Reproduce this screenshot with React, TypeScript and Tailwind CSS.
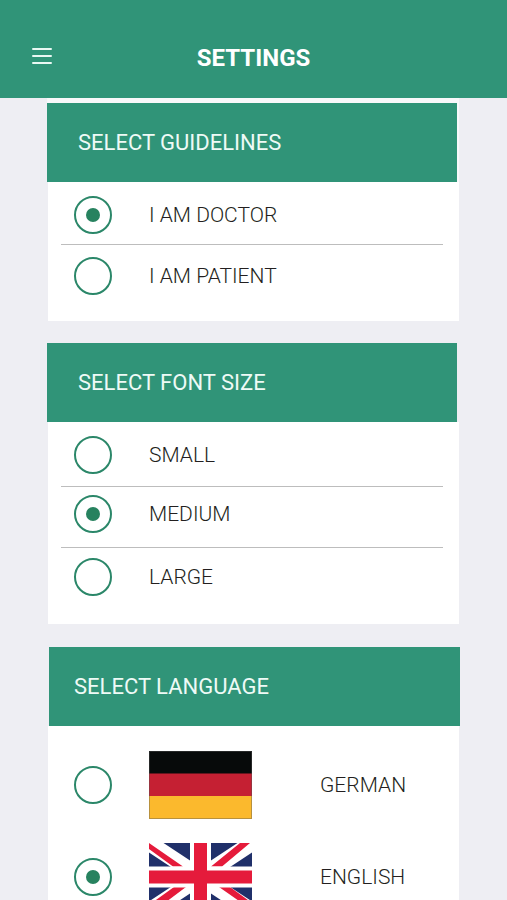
import { useState } from 'react';

const ring =
  "grid size-[38px] shrink-0 cursor-pointer appearance-none place-items-center rounded-full border-2 border-[#2b8769] bg-white before:size-3.5 before:rounded-full before:content-[''] checked:before:bg-[#27825f]";
const label = 'text-[21px] leading-7 font-light text-[#231f20]';

const guidelines = [
  { id: 'doctor', text: 'I AM DOCTOR', pad: 'pt-3.5 pb-2.5' },
  { id: 'patient', text: 'I AM PATIENT', pad: 'pt-3 pb-6.5' },
];

const sizes = [
  { id: 'small', text: 'SMALL', pad: 'pt-3.5 pb-3' },
  { id: 'medium', text: 'MEDIUM', pad: 'pt-2 pb-3.5' },
  { id: 'large', text: 'LARGE', pad: 'pt-2.5 pb-7' },
];

function GermanFlag() {
  return (
    <svg viewBox="0 0 103 68" className="h-[68px] w-[103px] shrink-0" aria-hidden="true">
      <rect width="103" height="23" fill="#070a0a" />
      <rect y="22.5" width="103" height="23" fill="#c52033" />
      <rect y="45" width="103" height="23" fill="#fbb92d" />
      <rect x=".5" y=".5" width="102" height="67" fill="none" stroke="#555" strokeOpacity=".4" />
    </svg>
  );
}

function BritishFlag() {
  return (
    <svg viewBox="0 0 103 68" className="h-[68px] w-[103px] shrink-0" aria-hidden="true">
      <rect width="103" height="68" fill="#20306a" />
      <path d="M0 0L103 68M103 0L0 68" stroke="#fff" strokeWidth="16" />
      {/* the red diagonals are shifted off centre in every quarter */}
      <path
        d="M0 0L34 23.5H24L0 6ZM101 0H91L62 23.5H73ZM37 44H25L0 62V68H5ZM70 44H81L103 60V67Z"
        fill="#e51b3b"
      />
      <path d="M51.5 0V68M0 34H103" stroke="#fff" strokeWidth="21" />
      <path d="M51.5 0V68M0 34H103" stroke="#e51b3b" strokeWidth="13" />
    </svg>
  );
}

const languages = [
  { id: 'de', text: 'GERMAN', Flag: GermanFlag },
  { id: 'en', text: 'ENGLISH', Flag: BritishFlag },
];

function Title({ className, children }: { className: string; children: React.ReactNode }) {
  return (
    <h2 className={`flex h-[79px] items-center bg-[#309478] text-[22px] leading-7 text-[#eefaf6] ${className}`}>
      {children}
    </h2>
  );
}

type Option = { id: string; text: string; pad: string };

function Options({ name, options, value, onChange }: { name: string; options: Option[]; value: string; onChange: (v: string) => void }) {
  return (
    <div className="ml-px divide-y divide-[#bdbdbd] bg-white pr-4 pl-[13px]">
      {options.map(o => (
        <label key={o.id} className={`flex cursor-pointer items-center gap-[37px] pl-[13px] ${o.pad}`}>
          <input type="radio" name={name} checked={value === o.id} onChange={() => onChange(o.id)} className={ring} />
          <span className={label}>{o.text}</span>
        </label>
      ))}
    </div>
  );
}

export default function App() {
  const [role, setRole] = useState('doctor');
  const [size, setSize] = useState('medium');
  const [lang, setLang] = useState('en');

  return (
    <div className="flex h-screen flex-col bg-[#eeeef3] font-['Roboto',sans-serif]">
      <header className="grid h-[98px] shrink-0 grid-cols-[1fr_auto_1fr] items-center bg-[#309478] px-8 pt-[18px] text-white">
        <button type="button" aria-label="Menu" className="justify-self-start pb-1">
          <svg width="20" height="18" viewBox="0 0 20 18" stroke="#e9f8f3" strokeWidth="2" strokeLinecap="round">
            <path d="M1 2H19M1 9H19M1 16H19" />
          </svg>
        </button>
        <h1 className="text-2xl leading-7 font-bold">SETTINGS</h1>
      </header>

      <main className="flex-1 overflow-y-auto pr-12 pl-[47px] [scrollbar-width:none]">
        <section className="mb-[22px]">
          <div className="bg-[#f8f8fa] pt-[5px]">
            <Title className="mr-0.5 pl-[31px]">SELECT GUIDELINES</Title>
          </div>
          <Options name="role" options={guidelines} value={role} onChange={setRole} />
        </section>

        <section className="mb-[23px]">
          <Title className="mr-0.5 pl-[31px]">SELECT FONT SIZE</Title>
          <Options name="size" options={sizes} value={size} onChange={setSize} />
        </section>

        <section>
          <Title className="-mr-px ml-0.5 pl-[25px]">SELECT LANGUAGE</Title>
          <div className="ml-px flex flex-col gap-6 bg-white pt-[25px] pb-8 pl-[26px]">
            {languages.map(({ id, text, Flag }) => (
              <label key={id} className="flex cursor-pointer items-center">
                <input type="radio" name="lang" checked={lang === id} onChange={() => setLang(id)} className={ring} />
                <span className="mr-[68px] ml-[37px]"><Flag /></span>
                <span className={label}>{text}</span>
              </label>
            ))}
          </div>
        </section>
      </main>
    </div>
  );
}
